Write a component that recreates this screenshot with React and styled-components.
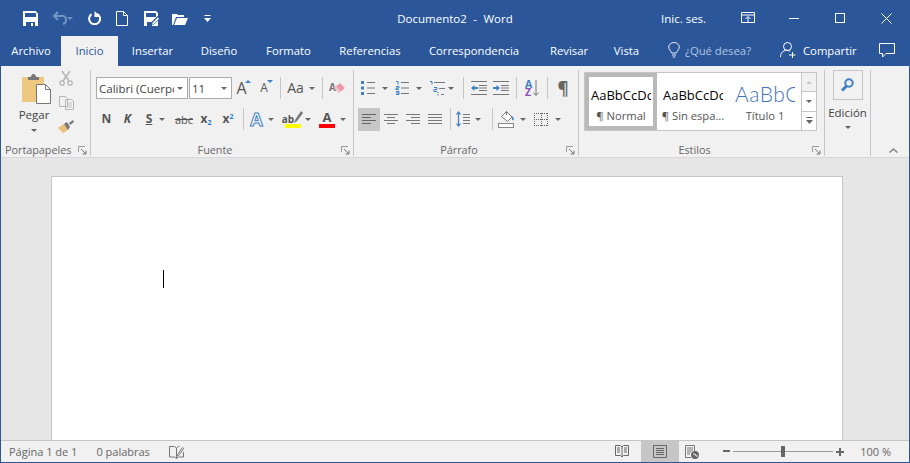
import React from "react";
import styled, { createGlobalStyle } from "styled-components";

const GlobalStyle = createGlobalStyle`
  html, body { margin: 0; padding: 0; background: #2b579a; }
  * { box-sizing: border-box; }
  body { font-family: "Open Sans", "Noto Sans", sans-serif; font-size: 11.5px; color: #444; }
`;

const Win = styled.div`
  width: 910px;
  height: 463px;
  display: flex;
  flex-direction: column;
  background: #2b579a;
  padding: 0 1px 1px;
  overflow: hidden;
`;

const TitleBar = styled.div`
  height: 36px;
  display: grid;
  grid-template-columns: 1fr auto 1fr;
  align-items: center;
  color: #fff;
`;

const Qat = styled.div`
  display: flex;
  align-items: center;
  padding-left: 22px;
`;

const QatSlot = styled.div`
  width: ${(p) => p.$w}px;
  display: flex;
  align-items: center;
`;

const Title = styled.div`
  font-size: 11.5px;
  word-spacing: 3.5px;
`;

const WinControls = styled.div`
  display: flex;
  align-items: center;
  justify-content: flex-end;
  font-size: 11.5px;
`;

const WinSlot = styled.div`
  width: ${(p) => p.$w}px;
  display: flex;
`;

const TabBar = styled.div`
  height: 30px;
  display: flex;
  color: #fff;
`;

const Tab = styled.div`
  width: ${(p) => p.$w}px;
  flex: none;
  display: flex;
  align-items: center;
  justify-content: center;
  font-size: 11.3px;
  padding-bottom: 2px;
  background: ${(p) => (p.$active ? "#f1f1f1" : "transparent")};
  color: ${(p) => (p.$active ? "#2b579a" : "#fff")};
`;

const TellMe = styled.div`
  margin-left: 19px;
  width: 112px;
  flex: none;
  display: flex;
  align-items: center;
  gap: 5px;
  color: #b3c5e0;
  font-size: 11.3px;
  padding-bottom: 2px;
`;

const ShareBox = styled.div`
  display: flex;
  flex: none;
  align-items: center;
  gap: 7px;
  font-size: 11.3px;
  padding-bottom: 2px;
`;

const CommentBox = styled.div`
  margin-left: 22px;
  display: flex;
  align-items: center;
  padding-bottom: 2px;
`;

const Ribbon = styled.div`
  height: 92px;
  background: #f1f1f1;
  display: flex;
  align-items: flex-start;
  border-bottom: 1px solid #d8d8d8;
`;

const Group = styled.div`
  width: ${(p) => p.$w}px;
  height: 86px;
  margin-top: 4px;
  flex: none;
  border-right: 1px solid #c6c6c6;
  display: flex;
  flex-direction: column;
`;

const GroupBody = styled.div`
  flex: 1;
  padding: ${(p) => p.$pad || "7px 0 0 5px"};
  display: flex;
  flex-direction: ${(p) => p.$dir || "column"};
  gap: ${(p) => p.$gap ?? 9}px;
`;

const GroupFooter = styled.div`
  height: 17px;
  display: flex;
  align-items: flex-end;
  color: #666;
  font-size: 10.8px;
  line-height: 12px;
  padding: 0 3px 0 ${(p) => p.$left || 4}px;
`;

const GroupLabel = styled.div`
  flex: ${(p) => (p.$left ? "0 0 auto" : 1)};
  text-align: center;
  white-space: nowrap;
  padding-right: ${(p) => (p.$left ? 0 : 6)}px;
`;

const Launcher = styled.svg`
  margin-left: auto;
  flex: none;
  margin-bottom: 1px;
`;

const Row = styled.div`
  display: flex;
  height: 22px;
  align-items: center;
`;

const Tool = styled.div`
  width: ${(p) => p.$w}px;
  height: 23px;
  flex: none;
  display: flex;
  align-items: center;
  justify-content: center;
  gap: ${(p) => p.$gap || 0}px;
  background: ${(p) => (p.$on ? "#c6c6c6" : "transparent")};
  color: #555;
`;

const Sep = styled.div`
  width: 1px;
  height: 22px;
  flex: none;
  background: #c6c6c6;
  margin-left: ${(p) => p.$ml || 0}px;
`;

const Combo = styled.div`
  width: ${(p) => p.$w}px;
  height: 22px;
  margin-left: ${(p) => p.$ml || 0}px;
  flex: none;
  background: #fff;
  border: 1px solid #ababab;
  display: flex;
  align-items: center;
  justify-content: space-between;
  padding: 0 4px 0 2px;
  font-size: 11.5px;
  color: #444;
  overflow: hidden;
  white-space: nowrap;
`;

const ComboText = styled.span`
  overflow: hidden;
  flex: 1;
  margin-right: 3px;
`;

const Glyph = styled.span`
  font-size: ${(p) => p.$size || 12}px;
  font-weight: ${(p) => p.$weight || 400};
  font-style: ${(p) => p.$italic || "normal"};
  text-decoration: ${(p) => p.$deco || "none"};
  color: ${(p) => p.$color || "#555"};
  line-height: 1;
  display: inline-flex;
  align-items: baseline;
`;

const Raised = styled.span`
  display: flex;
  align-self: flex-start;
  margin-top: ${(p) => p.$mt}px;
  margin-left: ${(p) => p.$ml}px;
`;

const Tiny = styled.span`
  font-size: 7px;
  color: #2b7cd3;
  font-weight: 700;
  position: relative;
  top: ${(p) => p.$top}px;
`;

const OutlineA = styled.span`
  font-size: 18px;
  font-weight: 700;
  line-height: 1;
  color: #fff;
  -webkit-text-stroke: 1px #3f7fc4;
`;

const ColorTool = styled.div`
  display: flex;
  flex-direction: column;
  align-items: center;
  width: 16px;
  line-height: 1;
`;

const ColorBar = styled.div`
  width: 16px;
  height: 4px;
  background: ${(p) => p.$c};
`;

const EraserWrap = styled.div`
  display: flex;
  align-items: flex-start;
`;

const EraserLetter = styled.span`
  font-size: 10px;
  font-weight: 700;
  line-height: 10px;
  color: #777;
  margin-right: -3px;
`;

const SortBox = styled.div`
  display: flex;
  gap: 1px;
  align-items: center;
`;

const SortLetters = styled.div`
  display: flex;
  flex-direction: column;
  font-size: 10.5px;
  font-weight: 700;
  line-height: 8px;
`;

const SortA = styled.span`
  color: #3f7fc4;
`;

const SortZ = styled.span`
  color: #8a4fb5;
`;

const PasteCol = styled.div`
  width: 50px;
  flex: none;
  display: flex;
  flex-direction: column;
  align-items: center;
  padding-top: 3px;
`;

const PasteArt = styled.div`
  display: flex;
  margin-left: 4px;
`;

const PasteLabel = styled.div`
  font-size: 11.5px;
  margin-top: 3px;
  line-height: 16px;
  color: #444;
`;

const MiniCol = styled.div`
  display: flex;
  flex-direction: column;
  align-items: center;
  gap: 10px;
  width: 14px;
  flex: none;
`;

const CaretWrap = styled.div`
  display: flex;
  margin-top: ${(p) => p.$mt || 6}px;
`;

const Gallery = styled.div`
  width: 233px;
  height: 59px;
  margin-top: -5px;
  border: 1px solid #c6c6c6;
  background: #fff;
  display: flex;
`;

const StyleItem = styled.div`
  width: 72px;
  height: 100%;
  flex: none;
  display: flex;
  flex-direction: column;
  align-items: center;
  border: 4px solid ${(p) => (p.$on ? "#b9b9b9" : "transparent")};
  padding: 0 2px;
`;

const StylePreview = styled.div`
  width: 60px;
  height: 29px;
  overflow: hidden;
  white-space: nowrap;
  display: flex;
  align-items: flex-end;
  font-family: ${(p) => (p.$big ? "Lato" : '"Open Sans"')}, sans-serif;
  font-size: ${(p) => (p.$big ? 21 : 13)}px;
  font-weight: ${(p) => (p.$big ? 300 : 400)};
  letter-spacing: ${(p) => (p.$big ? 0.5 : 0)}px;
  line-height: ${(p) => (p.$big ? 24 : 21)}px;
  color: ${(p) => (p.$big ? "#4472b8" : "#000")};
`;

const StyleName = styled.div`
  font-size: 11.2px;
  line-height: 14px;
  margin-top: 3px;
  color: #555;
  white-space: nowrap;
`;

const GalleryScroll = styled.div`
  width: 16px;
  margin-left: auto;
  display: flex;
  flex-direction: column;
  border-left: 1px solid #c6c6c6;
`;

const ScrollBtn = styled.div`
  flex: 1;
  display: flex;
  align-items: center;
  justify-content: center;
  background: ${(p) => (p.$off ? "#f1f1f1" : "#fff")};
  & + & { border-top: 1px solid #c6c6c6; }
`;

const EditCol = styled.div`
  display: flex;
  flex-direction: column;
  align-items: center;
  width: 100%;
`;

const FindBtn = styled.div`
  width: 30px;
  height: 30px;
  border: 1px solid #c6c6c6;
  display: flex;
  align-items: center;
  justify-content: center;
`;

const EditLabel = styled.div`
  font-size: 11.5px;
  line-height: 16px;
  margin-top: 5px;
  color: #444;
`;

const CollapseCol = styled.div`
  flex: 1;
  height: 85px;
  margin-top: 4px;
  display: flex;
  align-items: flex-end;
  justify-content: flex-end;
  padding: 0 11px 2px 0;
`;

const Workspace = styled.div`
  flex: 1;
  min-height: 0;
  background: #e6e6e6;
  padding: 18px 0 0 50px;
  overflow: hidden;
`;

const Page = styled.div`
  width: 792px;
  height: 100%;
  background: #fff;
  border: 1px solid #c6c6c6;
  border-bottom: 0;
  padding: 93px 0 0 111px;
`;

const TextCaret = styled.div`
  width: 1px;
  height: 18px;
  background: #000;
`;

const StatusBar = styled.div`
  height: 22px;
  background: #f1f1f1;
  border-top: 1px solid #c6c6c6;
  display: flex;
  align-items: stretch;
  color: #666;
  font-size: 11px;
`;

const StatusLeft = styled.div`
  display: flex;
  align-items: center;
  padding-left: 8px;
  gap: 19px;
`;

const StatusRight = styled.div`
  margin-left: auto;
  display: flex;
  align-items: stretch;
  padding-right: 18px;
`;

const ViewBtn = styled.div`
  width: ${(p) => p.$w}px;
  display: flex;
  align-items: center;
  justify-content: center;
  background: ${(p) => (p.$on ? "#c6c6c6" : "transparent")};
`;

const Zoom = styled.div`
  display: flex;
  align-items: center;
  margin-left: 18px;
  gap: 3px;
`;

const ZoomTrack = styled.div`
  width: 100px;
  height: 1px;
  background: #999;
  display: flex;
  justify-content: center;
  align-items: center;
`;

const ZoomThumb = styled.div`
  width: 4px;
  height: 11px;
  flex: none;
  background: #666;
`;

const ZoomPct = styled.div`
  margin-left: 16px;
  align-self: center;
  white-space: nowrap;
`;

const Svg = ({ w, h, children, ...rest }) => (
  <svg width={w} height={h} viewBox={`0 0 ${w} ${h}`} fill="none" {...rest}>
    {children}
  </svg>
);

const Caret = ({ c = "#666" }) => (
  <Svg w={6} h={3}>
    <path d="M0 0h6L3 3z" fill={c} />
  </Svg>
);

const FloppyIcon = () => (
  <Svg w={15} h={15}>
    <path d="M0 0h12.500L15 2.500V15H0z" fill="#fff" />
    <rect x="2" y="2" width="11" height="4" fill="#2b579a" />
    <rect x="3" y="11" width="9" height="4" fill="#2b579a" />
    <rect x="8" y="12" width="2" height="3" fill="#fff" />
  </Svg>
);

const UndoIcon = () => (
  <Svg w={15} h={14}>
    <path d="M6 1 2 5l4 4M2 5h7a4 4 0 0 1 2 8" stroke="#7494c4" strokeWidth="2" />
  </Svg>
);

const RedoIcon = () => (
  <Svg w={14} h={14}>
    <path d="M4.500 3.200A5.500 5.500 0 1 0 10 2.800" stroke="#fff" strokeWidth="2" />
    <path d="M7.500 0v6H13.500z" fill="#fff" />
  </Svg>
);

const NewDocIcon = () => (
  <Svg w={12} h={15}>
    <path d="M.5.5h7l4 4v10H.5zM7.500.5v4h4" stroke="#fff" />
  </Svg>
);

const SaveAsIcon = () => (
  <Svg w={16} h={15}>
    <path d="M0 0h12l2 2v13H0z" fill="#fff" />
    <rect x="2" y="2" width="10" height="4" fill="#2b579a" />
    <rect x="3" y="11" width="5" height="4" fill="#2b579a" />
    <path d="M6 15l1.500-4 6-6 2.500 2.500-6 6z" fill="#2b579a" />
    <path d="M8 14l.8-2.400 5-5L15 7.800l-5 5z" fill="#fff" />
  </Svg>
);

const FolderIcon = () => (
  <Svg w={16} h={13}>
    <path d="M0 13V2h5l1 1h6v2H4L1 13z" fill="#fff" />
    <path d="M2 13l3-7h11l-3 7z" fill="#fff" />
  </Svg>
);

const CustomizeIcon = ({ c = "#fff" }) => (
  <Svg w={7} h={7}>
    <rect width="6" height="1" x=".5" fill={c} />
    <path d="M0 3h7L3.500 7z" fill={c} />
  </Svg>
);

const RibbonDisplayIcon = () => (
  <Svg w={14} h={12}>
    <path d="M.5.5h13v10H.5zM.5 3h13" stroke="#fff" />
    <path d="M7 10V5M4.500 7 7 4.500 9.500 7" stroke="#fff" />
  </Svg>
);

const MinIcon = () => (
  <Svg w={10} h={10}>
    <path d="M0 5.500h10" stroke="#fff" />
  </Svg>
);

const MaxIcon = () => (
  <Svg w={10} h={10}>
    <rect x=".5" y=".5" width="9" height="9" stroke="#fff" />
  </Svg>
);

const CloseIcon = () => (
  <Svg w={11} h={11}>
    <path d="M.5.5l10 10M10.500.5l-10 10" stroke="#fff" />
  </Svg>
);

const BulbIcon = () => (
  <Svg w={12} h={16}>
    <path d="M3.500 11C3 8.500.7 7.500.7 5a5.300 4.500 0 0 1 10.600 0c0 2.500-2.300 3.500-2.800 6zM4 13h4M4.800 15h2.400" stroke="#e6ecf5" />
  </Svg>
);

const PersonIcon = () => (
  <Svg w={16} h={16}>
    <circle cx="7.500" cy="4.500" r="4" stroke="#fff" />
    <path d="M.5 15c0-4 2.500-6.500 6-6.700 1.500 0 2.500.4 3.500 1M9 13h6.500M12.500 10v6" stroke="#fff" />
  </Svg>
);

const CommentIcon = () => (
  <Svg w={16} h={15}>
    <path d="M.5.5h15v10H7l-3.500 3.500V10.500h-3z" stroke="#fff" />
  </Svg>
);

const PasteIcon = () => (
  <Svg w={29} h={30}>
    <rect x="0" y="3" width="22" height="25" rx="1" fill="#edc87e" />
    <path d="M6 3h2.500l2-3h2l2 3H17v3H6z" fill="#767676" />
    <path d="M14.500 10.500h9l5 5v14h-14z" fill="#fff" stroke="#767676" />
    <path d="M23.500 10.500v5h5" stroke="#767676" />
  </Svg>
);

const ScissorsIcon = () => (
  <Svg w={14} h={15}>
    <path d="M3 0l7 10M11 0 4 10" stroke="#b5b5b5" strokeWidth="1.500" />
    <circle cx="3" cy="12" r="2.200" stroke="#b5b5b5" strokeWidth="1.300" />
    <circle cx="11" cy="12" r="2.200" stroke="#b5b5b5" strokeWidth="1.300" />
  </Svg>
);

const CopyIcon = () => (
  <Svg w={15} h={14}>
    <path d="M.5.500h6l2 2v8h-8zM6.500 3.500h6l2 2v8h-8z" stroke="#b5b5b5" fill="#f1f1f1" />
    <path d="M8 7h5M8 9h5M8 11h5" stroke="#c6c6c6" />
  </Svg>
);

const BrushIcon = () => (
  <Svg w={16} h={13}>
    <path d="M0 8l6-4 4 6-5 3z" fill="#e9bf75" />
    <path d="M6 4l3-2 3 5-2 3z" fill="#777" />
    <path d="M11 3l4-3 1 2-4 3z" fill="#777" />
  </Svg>
);

const GrowIcon = ({ up, c = "#3f7fc4" }) => (
  <Svg w={6} h={3}>
    <path d={up ? "M0 3h6L3 0z" : "M0 0h6L3 3z"} fill={c} />
  </Svg>
);

const EraserIcon = () => (
  <Svg w={13} h={12}>
    <path d="M1 6l6-5 5 5-6 5z" fill="#ef9aa6" />
    <path d="M1 6l5 5 2-1.700-5-5z" fill="#f7c6cd" />
  </Svg>
);

const PenIcon = () => (
  <Svg w={9} h={12}>
    <path d="M7 0l2 2-6 8-3 2 1-3z" fill="#777" />
  </Svg>
);

const BulletsIcon = () => (
  <Svg w={14} h={14}>
    <rect x="0" y="0" width="3" height="3" fill="#3f7fc4" />
    <rect x="0" y="5.500" width="3" height="3" fill="#3f7fc4" />
    <rect x="0" y="11" width="3" height="3" fill="#3f7fc4" />
    <path d="M6 1.500h8M6 7h8M6 12.500h8" stroke="#777" />
  </Svg>
);

const NumberedIcon = () => (
  <Svg w={14} h={14}>
    <path d="M1 .5h2v3M1 5.500h3v1.500H1v1.500h3M1 10.500h3v3H1M1 12h3" stroke="#3f7fc4" />
    <path d="M6 1.500h8M6 7h8M6 12.500h8" stroke="#777" />
  </Svg>
);

const MultiIcon = () => (
  <Svg w={16} h={15}>
    <path d="M1 .5h2v3M5 6.500h3v2H5v2h3M9 13v1.500M9 11v1" stroke="#3f7fc4" />
    <path d="M5 1.500h11M10 7.500h6M12 13.500h3" stroke="#777" />
  </Svg>
);

const IndentIcon = ({ out }) => (
  <Svg w={16} h={14}>
    <path d="M0 .5h16M0 13.500h16M8 4.500h8M8 7h8M8 9.500h8" stroke="#777" />
    <path d={out ? "M0 7l3.500-3v2H7v2H3.500v2z" : "M7 7 3.500 4v2H0v2h3.500v2z"} fill="#3f7fc4" />
  </Svg>
);

const SortArrow = () => (
  <Svg w={6} h={16}>
    <path d="M3 0v15M.5 12.500l2.500 3 2.500-3" stroke="#777" />
  </Svg>
);

const AlignIcon = ({ kind }) => {
  const lines = {
    left: ["M0 .5h14", "M0 3.500h9", "M0 6.500h14", "M0 9.500h9"],
    center: ["M0 .5h14", "M3 3.500h8", "M0 6.500h14", "M3 9.500h8"],
    right: ["M0 .5h14", "M5 3.500h9", "M0 6.500h14", "M5 9.500h9"],
    justify: ["M0 .5h14", "M0 3.500h14", "M0 6.500h14", "M0 9.500h14"],
  }[kind];
  return (
    <Svg w={14} h={10}>
      <path d={lines.join("")} stroke={kind === "left" ? "#666" : "#777"} />
    </Svg>
  );
};

const LineSpacingIcon = () => (
  <Svg w={14} h={16}>
    <path d="M2.500 1v14M.5 3.500l2-2.500 2 2.500M.5 12.500l2 2.500 2-2.500" stroke="#3f7fc4" strokeWidth="1.200" />
    <path d="M7 3.500h7M7 6.500h7M7 9.500h7M7 12.500h7" stroke="#777" />
  </Svg>
);

const ShadeIcon = () => (
  <Svg w={17} h={18}>
    <path d="M3.500 6.500 8.500 1.500l5.500 5.500-4.500 4.500z" fill="#fff" stroke="#777" />
    <path d="M8.500 1V5" stroke="#777" />
    <path d="M14 6c1.800 1.500 2.500 4 1.200 4.400C14 10.600 13.600 8 14 6z" fill="#3f7fc4" />
    <rect x=".5" y="13.500" width="15" height="4" fill="#fff" stroke="#888" />
  </Svg>
);

const BordersIcon = () => (
  <Svg w={14} h={13}>
    <path d="M0 .5h14M0 6.500h14M0 12.500h14M.5 0v13M7.500 0v13M13.500 0v13" stroke="#666" strokeDasharray="1 1" />
  </Svg>
);

const LauncherIcon = () => (
  <Launcher width="9" height="9" viewBox="0 0 9 9" fill="none">
    <path d="M.5 6V.5H7" stroke="#999" />
    <path d="M3 3l5 5M8 4.500V8H4.500" stroke="#777" />
  </Launcher>
);

const FindIcon = () => (
  <Svg w={13} h={14}>
    <circle cx="8" cy="5" r="3.700" stroke="#3f7fc4" strokeWidth="2" />
    <path d="M5.500 8 1 12.500" stroke="#3f7fc4" strokeWidth="3" />
  </Svg>
);

const ChevronUp = () => (
  <Svg w={9} h={5}>
    <path d="M.5 4.500l4-3.500 4 3.500" stroke="#888" strokeWidth="1.500" />
  </Svg>
);

const ProofIcon = () => (
  <Svg w={15} h={14}>
    <path d="M7.500 13.500V3L5.500 1.500h-5v10.500h5zM7.500 13.500l2-1.500h5V7M7.500 3l2-1.500h1" stroke="#777" />
    <path d="M8.500 9.500l5-7 1.200 1-5 7-1.500.5z" stroke="#777" fill="#f1f1f1" />
  </Svg>
);

const ReadIcon = () => (
  <Svg w={14} h={13}>
    <path d="M.5.500h5L7 2l1.500-1.500h5v10h-5L7 12l-1.500-1.500h-5zM7 2v10M2 3h3M2 5h3M2 7h3M9 3h3M9 5h3M9 7h3" stroke="#666" />
  </Svg>
);

const PrintIcon = () => (
  <Svg w={14} h={13}>
    <path d="M.5.500h13v12H.5zM3 3.500h8M3 5.500h8M3 7.500h8M3 9.500h8" stroke="#666" />
  </Svg>
);

const WebIcon = () => (
  <Svg w={14} h={14}>
    <path d="M.5 12.500V.5h9V6M2 3h6M2 5h6M2 7h4M2 9h3M.5 12.500H6" stroke="#777" />
    <circle cx="10" cy="10" r="4" fill="#666" />
    <path d="M8 9h2l1 2h2" stroke="#f1f1f1" />
  </Svg>
);

const MinusIcon = () => (
  <Svg w={7} h={3}>
    <rect width="7" height="2" fill="#666" />
  </Svg>
);

const PlusIcon = () => (
  <Svg w={8} h={8}>
    <path d="M0 4h8M4 0v8" stroke="#666" strokeWidth="2" />
  </Svg>
);

function App() {
  return (
    <Win>
      <GlobalStyle />
      <TitleBar>
        <Qat>
          <QatSlot $w={29}><FloppyIcon /></QatSlot>
          <QatSlot $w={35}><UndoIcon /><Caret c="#7494c4" /></QatSlot>
          <QatSlot $w={29}><RedoIcon /></QatSlot>
          <QatSlot $w={28}><NewDocIcon /></QatSlot>
          <QatSlot $w={28}><SaveAsIcon /></QatSlot>
          <QatSlot $w={32}><FolderIcon /></QatSlot>
          <QatSlot $w={10}><CustomizeIcon /></QatSlot>
        </Qat>
        <Title>Documento2 - Word</Title>
        <WinControls>
          <WinSlot $w={80}>Inic. ses.</WinSlot>
          <WinSlot $w={48}><RibbonDisplayIcon /></WinSlot>
          <WinSlot $w={46}><MinIcon /></WinSlot>
          <WinSlot $w={46}><MaxIcon /></WinSlot>
          <WinSlot $w={28}><CloseIcon /></WinSlot>
        </WinControls>
      </TitleBar>

      <TabBar>
        <Tab $w={60}>Archivo</Tab>
        <Tab $w={57} $active>Inicio</Tab>
        <Tab $w={69}>Insertar</Tab>
        <Tab $w={64}>Diseño</Tab>
        <Tab $w={75}>Formato</Tab>
        <Tab $w={88}>Referencias</Tab>
        <Tab $w={120}>Correspondencia</Tab>
        <Tab $w={70}>Revisar</Tab>
        <Tab $w={45}>Vista</Tab>
        <TellMe><BulbIcon />¿Qué desea?</TellMe>
        <ShareBox><PersonIcon />Compartir</ShareBox>
        <CommentBox><CommentIcon /></CommentBox>
      </TabBar>

      <Ribbon>
        <Group $w={90}>
          <GroupBody $dir="row" $pad="1px 0 0 8px" $gap={0}>
            <PasteCol>
              <PasteArt><PasteIcon /></PasteArt>
              <PasteLabel>Pegar</PasteLabel>
              <CaretWrap><Caret /></CaretWrap>
            </PasteCol>
            <MiniCol>
              <ScissorsIcon />
              <CopyIcon />
              <BrushIcon />
            </MiniCol>
          </GroupBody>
          <GroupFooter $left={4}>
            <GroupLabel $left>Portapapeles</GroupLabel>
            <LauncherIcon />
          </GroupFooter>
        </Group>

        <Group $w={263}>
          <GroupBody>
            <Row>
              <Combo $w={92}>
                <ComboText>Calibri (Cuerpo</ComboText>
                <Caret />
              </Combo>
              <Combo $w={43} $ml={1}>
                <ComboText>11</ComboText>
                <Caret />
              </Combo>
              <Tool $w={23}>
                <Glyph $size={16}>A</Glyph>
                <Raised $mt={3} $ml={-2}><GrowIcon up /></Raised>
              </Tool>
              <Tool $w={23}>
                <Glyph $size={12}>A</Glyph>
                <Raised $mt={3} $ml={-1}><GrowIcon /></Raised>
              </Tool>
              <Sep $ml={2} />
              <Tool $w={40} $gap={5}>
                <Glyph $size={14}>Aa</Glyph>
                <Caret />
              </Tool>
              <Sep $ml={1} />
              <Tool $w={29}>
                <EraserWrap>
                  <EraserLetter>A</EraserLetter>
                  <EraserIcon />
                </EraserWrap>
              </Tool>
            </Row>
            <Row>
              <Tool $w={21}><Glyph $weight={700}>N</Glyph></Tool>
              <Tool $w={21}><Glyph $weight={700} $italic="italic">K</Glyph></Tool>
              <Tool $w={35} $gap={7}>
                <Glyph $weight={700} $deco="underline">S</Glyph>
                <Caret />
              </Tool>
              <Tool $w={22}><Glyph $size={11} $deco="line-through">abc</Glyph></Tool>
              <Tool $w={22}><Glyph $weight={700}>x<Tiny $top={2}>2</Tiny></Glyph></Tool>
              <Tool $w={22}><Glyph $weight={700}>x<Tiny $top={-4}>2</Tiny></Glyph></Tool>
              <Sep $ml={4} />
              <Tool $w={36} $gap={5}>
                <OutlineA>A</OutlineA>
                <Caret />
              </Tool>
              <Tool $w={35} $gap={4}>
                <ColorTool>
                  <Glyph $size={10} $weight={700}>ab<PenIcon /></Glyph>
                  <ColorBar $c="#ffff00" />
                </ColorTool>
                <Caret />
              </Tool>
              <Tool $w={35} $gap={5}>
                <ColorTool>
                  <Glyph $size={13} $weight={700}>A</Glyph>
                  <ColorBar $c="#ff0000" />
                </ColorTool>
                <Caret />
              </Tool>
            </Row>
          </GroupBody>
          <GroupFooter>
            <GroupLabel>Fuente</GroupLabel>
            <LauncherIcon />
          </GroupFooter>
        </Group>

        <Group $w={225}>
          <GroupBody $pad="7px 0 0 4px">
            <Row>
              <Tool $w={33} $gap={7}><BulletsIcon /><Caret /></Tool>
              <Tool $w={34} $gap={7}><NumberedIcon /><Caret /></Tool>
              <Tool $w={32} $gap={3}><MultiIcon /><Caret /></Tool>
              <Sep $ml={6} />
              <Tool $w={29}><IndentIcon out /></Tool>
              <Tool $w={16}><IndentIcon /></Tool>
              <Sep $ml={7} />
              <Tool $w={30}>
                <SortBox>
                  <SortLetters>
                    <SortA>A</SortA>
                    <SortZ>Z</SortZ>
                  </SortLetters>
                  <SortArrow />
                </SortBox>
              </Tool>
              <Sep />
              <Tool $w={30}><Glyph $size={17} $weight={700} $color="#666">¶</Glyph></Tool>
            </Row>
            <Row>
              <Tool $w={22} $on><AlignIcon kind="left" /></Tool>
              <Tool $w={22}><AlignIcon kind="center" /></Tool>
              <Tool $w={22}><AlignIcon kind="right" /></Tool>
              <Tool $w={22}><AlignIcon kind="justify" /></Tool>
              <Sep $ml={4} />
              <Tool $w={35} $gap={5}><LineSpacingIcon /><Caret /></Tool>
              <Sep $ml={6} />
              <Tool $w={37} $gap={5}><ShadeIcon /><Caret /></Tool>
              <Tool $w={34} $gap={7}><BordersIcon /><Caret /></Tool>
            </Row>
          </GroupBody>
          <GroupFooter>
            <GroupLabel>Párrafo</GroupLabel>
            <LauncherIcon />
          </GroupFooter>
        </Group>

        <Group $w={246}>
          <GroupBody $pad="7px 0 0 5px">
            <Gallery>
              <StyleItem $on>
                <StylePreview>AaBbCcDc</StylePreview>
                <StyleName>¶ Normal</StyleName>
              </StyleItem>
              <StyleItem>
                <StylePreview>AaBbCcDc</StylePreview>
                <StyleName>¶ Sin espa...</StyleName>
              </StyleItem>
              <StyleItem>
                <StylePreview $big>AaBbCc</StylePreview>
                <StyleName>Título 1</StyleName>
              </StyleItem>
              <GalleryScroll>
                <ScrollBtn $off><GrowIcon up c="#c6c6c6" /></ScrollBtn>
                <ScrollBtn><Caret /></ScrollBtn>
                <ScrollBtn><CustomizeIcon c="#666" /></ScrollBtn>
              </GalleryScroll>
            </Gallery>
          </GroupBody>
          <GroupFooter>
            <GroupLabel>Estilos</GroupLabel>
            <LauncherIcon />
          </GroupFooter>
        </Group>

        <Group $w={46}>
          <EditCol>
            <FindBtn><FindIcon /></FindBtn>
            <EditLabel>Edición</EditLabel>
            <CaretWrap $mt={5}><Caret /></CaretWrap>
          </EditCol>
        </Group>

        <CollapseCol><ChevronUp /></CollapseCol>
      </Ribbon>

      <Workspace>
        <Page>
          <TextCaret />
        </Page>
      </Workspace>

      <StatusBar>
        <StatusLeft>
          <span>Página 1 de 1</span>
          <span>0 palabras</span>
          <ProofIcon />
        </StatusLeft>
        <StatusRight>
          <ViewBtn $w={38}><ReadIcon /></ViewBtn>
          <ViewBtn $w={38} $on><PrintIcon /></ViewBtn>
          <ViewBtn $w={26}><WebIcon /></ViewBtn>
          <Zoom>
            <MinusIcon />
            <ZoomTrack><ZoomThumb /></ZoomTrack>
            <PlusIcon />
          </Zoom>
          <ZoomPct>100 %</ZoomPct>
        </StatusRight>
      </StatusBar>
    </Win>
  );
}

export default App;
